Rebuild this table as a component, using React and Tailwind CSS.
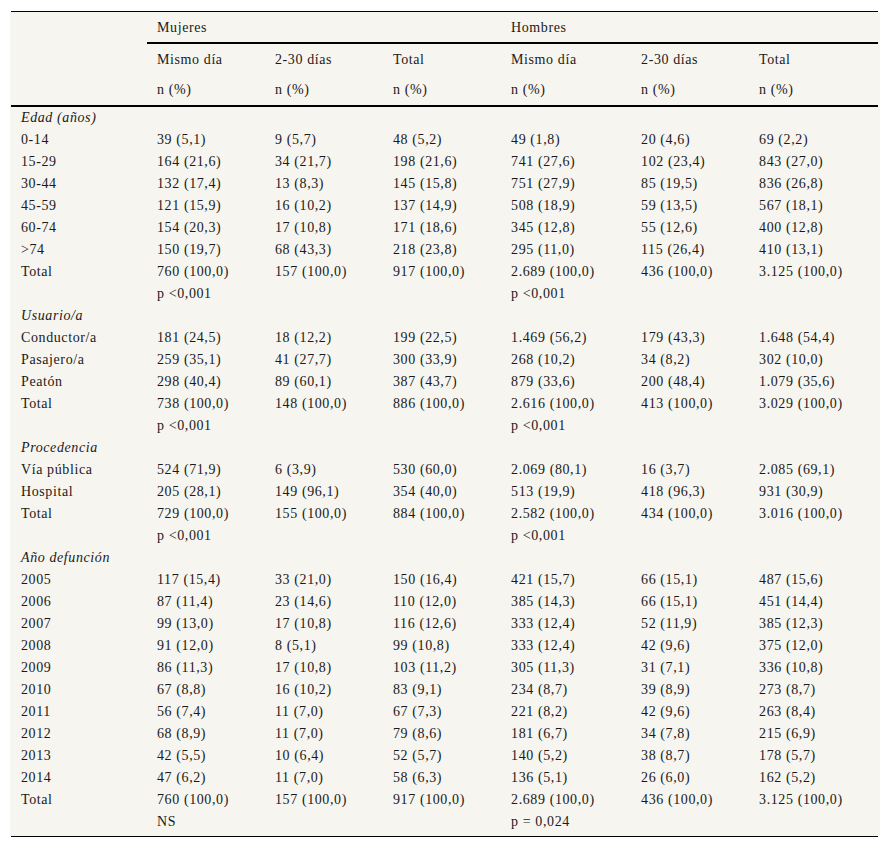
import React from "react";

const sections = [
  {
    title: "Edad (años)",
    rows: [
      ["0-14", "39 (5,1)", "9 (5,7)", "48 (5,2)", "49 (1,8)", "20 (4,6)", "69 (2,2)"],
      ["15-29", "164 (21,6)", "34 (21,7)", "198 (21,6)", "741 (27,6)", "102 (23,4)", "843 (27,0)"],
      ["30-44", "132 (17,4)", "13 (8,3)", "145 (15,8)", "751 (27,9)", "85 (19,5)", "836 (26,8)"],
      ["45-59", "121 (15,9)", "16 (10,2)", "137 (14,9)", "508 (18,9)", "59 (13,5)", "567 (18,1)"],
      ["60-74", "154 (20,3)", "17 (10,8)", "171 (18,6)", "345 (12,8)", "55 (12,6)", "400 (12,8)"],
      [">74", "150 (19,7)", "68 (43,3)", "218 (23,8)", "295 (11,0)", "115 (26,4)", "410 (13,1)"],
      ["Total", "760 (100,0)", "157 (100,0)", "917 (100,0)", "2.689 (100,0)", "436 (100,0)", "3.125 (100,0)"],
      ["", "p <0,001", "", "", "p <0,001", "", ""],
    ],
  },
  {
    title: "Usuario/a",
    rows: [
      ["Conductor/a", "181 (24,5)", "18 (12,2)", "199 (22,5)", "1.469 (56,2)", "179 (43,3)", "1.648 (54,4)"],
      ["Pasajero/a", "259 (35,1)", "41 (27,7)", "300 (33,9)", "268 (10,2)", "34 (8,2)", "302 (10,0)"],
      ["Peatón", "298 (40,4)", "89 (60,1)", "387 (43,7)", "879 (33,6)", "200 (48,4)", "1.079 (35,6)"],
      ["Total", "738 (100,0)", "148 (100,0)", "886 (100,0)", "2.616 (100,0)", "413 (100,0)", "3.029 (100,0)"],
      ["", "p <0,001", "", "", "p <0,001", "", ""],
    ],
  },
  {
    title: "Procedencia",
    rows: [
      ["Vía pública", "524 (71,9)", "6 (3,9)", "530 (60,0)", "2.069 (80,1)", "16 (3,7)", "2.085 (69,1)"],
      ["Hospital", "205 (28,1)", "149 (96,1)", "354 (40,0)", "513 (19,9)", "418 (96,3)", "931 (30,9)"],
      ["Total", "729 (100,0)", "155 (100,0)", "884 (100,0)", "2.582 (100,0)", "434 (100,0)", "3.016 (100,0)"],
      ["", "p <0,001", "", "", "p <0,001", "", ""],
    ],
  },
  {
    title: "Año defunción",
    rows: [
      ["2005", "117 (15,4)", "33 (21,0)", "150 (16,4)", "421 (15,7)", "66 (15,1)", "487 (15,6)"],
      ["2006", "87 (11,4)", "23 (14,6)", "110 (12,0)", "385 (14,3)", "66 (15,1)", "451 (14,4)"],
      ["2007", "99 (13,0)", "17 (10,8)", "116 (12,6)", "333 (12,4)", "52 (11,9)", "385 (12,3)"],
      ["2008", "91 (12,0)", "8 (5,1)", "99 (10,8)", "333 (12,4)", "42 (9,6)", "375 (12,0)"],
      ["2009", "86 (11,3)", "17 (10,8)", "103 (11,2)", "305 (11,3)", "31 (7,1)", "336 (10,8)"],
      ["2010", "67 (8,8)", "16 (10,2)", "83 (9,1)", "234 (8,7)", "39 (8,9)", "273 (8,7)"],
      ["2011", "56 (7,4)", "11 (7,0)", "67 (7,3)", "221 (8,2)", "42 (9,6)", "263 (8,4)"],
      ["2012", "68 (8,9)", "11 (7,0)", "79 (8,6)", "181 (6,7)", "34 (7,8)", "215 (6,9)"],
      ["2013", "42 (5,5)", "10 (6,4)", "52 (5,7)", "140 (5,2)", "38 (8,7)", "178 (5,7)"],
      ["2014", "47 (6,2)", "11 (7,0)", "58 (6,3)", "136 (5,1)", "26 (6,0)", "162 (5,2)"],
      ["Total", "760 (100,0)", "157 (100,0)", "917 (100,0)", "2.689 (100,0)", "436 (100,0)", "3.125 (100,0)"],
      ["", "NS", "", "", "p = 0,024", "", ""],
    ],
  },
];

export default function App() {
  const allRows = [];
  sections.forEach((s, si) => {
    allRows.push({ type: "title", text: s.title, key: `t${si}` });
    s.rows.forEach((r, ri) => allRows.push({ type: "row", cells: r, key: `r${si}-${ri}` }));
  });
  const lastIndex = allRows.length - 1;

  return (
    <div className="bg-white min-h-[849px] pt-[11px] pl-[10px]">
      <div
        className="w-[870px] bg-[#f7f5f0] px-[1px] text-[14px] tracking-[0.6px] text-[#1a1a1a]"
        style={{ fontFamily: '"Liberation Serif", "Times New Roman", serif' }}
      >
        <table className="table-fixed border-collapse w-[867px] border-t border-b border-black">
          <colgroup>
            <col className="w-[136px]" />
            <col className="w-[118px]" />
            <col className="w-[118px]" />
            <col className="w-[118px]" />
            <col className="w-[130px]" />
            <col className="w-[118px]" />
            <col className="w-[129px]" />
          </colgroup>
          <thead>
            <tr className="h-[31px]">
              <th className="p-0"></th>
              <th colSpan={3} className="pl-[10px] pt-[2px] text-left font-normal align-middle border-b-2 border-black">
                Mujeres
              </th>
              <th colSpan={3} className="pl-[10px] pt-[2px] text-left font-normal align-middle border-b-2 border-black">
                Hombres
              </th>
            </tr>
            <tr className="h-[31px]">
              <th className="p-0"></th>
              {["Mismo día", "2-30 días", "Total", "Mismo día", "2-30 días", "Total"].map((t, i) => (
                <th key={i} className="pl-[10px] pt-[1px] text-left font-normal align-middle">
                  {t}
                </th>
              ))}
            </tr>
            <tr className="h-[32px] border-b-2 border-black">
              <th className="p-0"></th>
              {Array.from({ length: 6 }).map((_, i) => (
                <th key={i} className="pl-[10px] pt-[1px] text-left font-normal align-middle">
                  n (%)
                </th>
              ))}
            </tr>
          </thead>
          <tbody>
            {allRows.map((r, idx) =>
              r.type === "title" ? (
                <tr key={r.key}>
                  <td colSpan={7} className="pl-[10px] h-[22px] leading-[22px] italic align-top">
                    {r.text}
                  </td>
                </tr>
              ) : (
                <tr key={r.key}>
                  {r.cells.map((c, ci) => (
                    <td
                      key={ci}
                      className={`pl-[10px] leading-[22px] align-top whitespace-nowrap ${
                        idx === lastIndex ? "pb-[3px]" : ""
                      }`}
                    >
                      {c}
                    </td>
                  ))}
                </tr>
              )
            )}
          </tbody>
        </table>
      </div>
    </div>
  );
}
